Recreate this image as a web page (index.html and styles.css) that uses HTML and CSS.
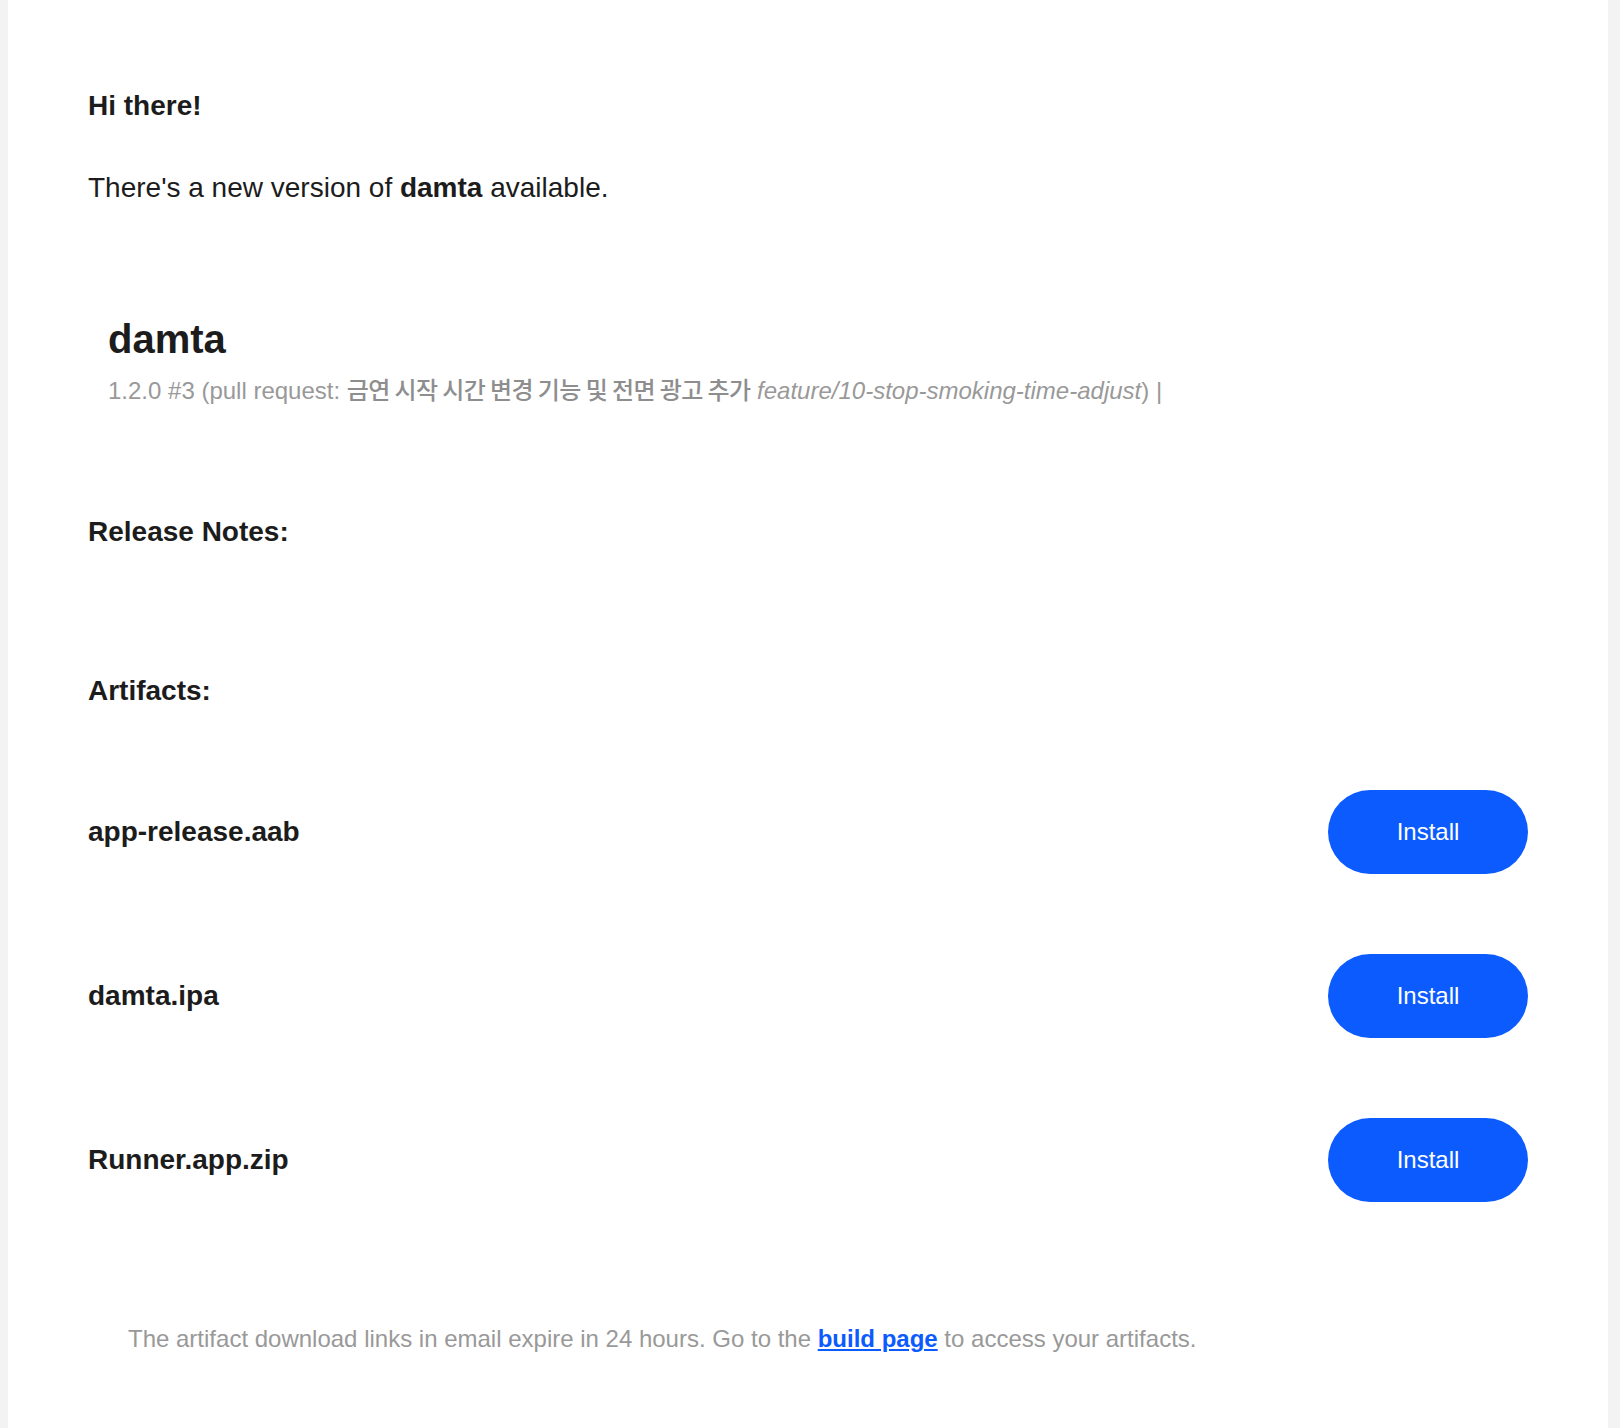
FILE: index.html
```html
<!DOCTYPE html>
<html lang="en">
  <head>
    <meta charset="UTF-8" />
    <meta name="viewport" content="width=device-width, initial-scale=1.0" />
    <title>New version of damta</title>
    <link rel="stylesheet" href="styles.css">
  </head>
  <body>
    <div class="wrapper">
      <p class="greeting">Hi there!</p>
      <p class="intro">There's a new version of <strong>damta</strong> available.</p>

      <div class="app-info">
        <h2>damta</h2>
        <p class="build-meta">1.2.0 #3 (pull request: <span class="pr-title">금연 시작 시간 변경 기능 및 전면 광고 추가</span> <em>feature/10-stop-smoking-time-adjust</em>) |</p>
      </div>

      <h3 class="section-title notes-title">Release Notes:</h3>
      <h3 class="section-title">Artifacts:</h3>

      <div class="artifacts">
        <div class="artifact">
          <span class="artifact-name">app-release.aab</span>
          <a class="install-btn" href="#">Install</a>
        </div>
        <div class="artifact">
          <span class="artifact-name">damta.ipa</span>
          <a class="install-btn" href="#">Install</a>
        </div>
        <div class="artifact">
          <span class="artifact-name">Runner.app.zip</span>
          <a class="install-btn" href="#">Install</a>
        </div>
      </div>

      <p class="footer-note">The artifact download links in email expire in 24 hours. Go to the <a href="#">build page</a> to access your artifacts.</p>
    </div>
  </body>
</html>
```

FILE: styles.css
```css
body {
  font-family: "Liberation Sans", Arial, "Noto Sans CJK KR", sans-serif;
  margin: 0 8px;
  padding: 0;
  background-color: #f3f3f3;
  color: #1c1c1c;
}
.wrapper {
  max-width: 1600px;
  min-height: 100vh;
  box-sizing: border-box;
  background-color: #fff;
  padding: 85px 80px 60px;
}
.greeting {
  margin: 0;
  font-size: 28px;
  line-height: 42px;
  font-weight: bold;
}
.intro {
  margin: 40px 0 0;
  font-size: 28px;
  line-height: 42px;
}
.app-info {
  margin-top: 106px;
  padding: 0 20px;
}
.app-info h2 {
  margin: 0;
  font-size: 40px;
  line-height: 48px;
}
.build-meta {
  margin: 8px 0 0;
  font-size: 24px;
  line-height: 36px;
  color: #999;
}
.pr-title {
  font-family: "Noto Sans CJK KR", sans-serif;
  font-weight: 500;
  letter-spacing: -0.6px;
  color: #8e8e8e;
}
.section-title {
  margin: 0;
  font-size: 28px;
  line-height: 42px;
}
.notes-title {
  margin: 102px 0 117px;
}
.artifacts {
  margin-top: 78px;
  display: flex;
  flex-direction: column;
  gap: 80px;
}
.artifact {
  display: flex;
  align-items: center;
  justify-content: space-between;
}
.artifact-name {
  font-size: 28px;
  line-height: 42px;
  font-weight: bold;
}
.install-btn {
  width: 200px;
  height: 84px;
  border-radius: 42px;
  background-color: #0b5bff;
  color: #fff;
  font-size: 24px;
  text-decoration: none;
  display: flex;
  align-items: center;
  justify-content: center;
}
.footer-note {
  margin: 119px 0 0;
  padding: 0 40px;
  font-size: 24px;
  line-height: 36px;
  color: #999;
}
.footer-note a {
  color: #0b5bff;
  font-weight: bold;
}
```
